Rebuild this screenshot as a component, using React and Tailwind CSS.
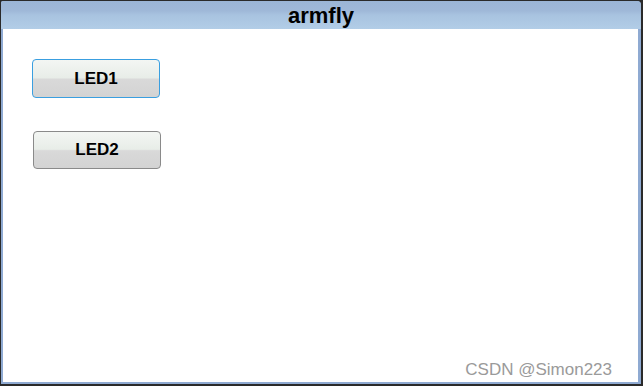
export default function App() {
  return (
    <div className="w-[643px] h-[386px] bg-[#2a2a2a] p-[1px] pb-[2px] pr-[2px]" style={{ fontFamily: '"Liberation Sans", Arial, sans-serif' }}>
      <div className="w-full h-full flex flex-col bg-[#8faad2] rounded-tr-[4px] rounded-tl-[2px] overflow-hidden">
        <div className="h-[28px] shrink-0 flex items-center justify-center bg-[linear-gradient(to_bottom,#9bb5d6_0%,#9fb8d8_35%,#a8c3e0_50%,#b2cde7_100%)]">
          <span className="text-[22px] font-bold text-black leading-none translate-y-[1px]">armfly</span>
        </div>
        <div className="flex-1 ml-[2px] mr-[3px] mb-[2px] bg-white flex flex-col relative">
          <div className="flex flex-col gap-[33px] pl-[29px] pt-[30px]">
            <button className="w-[128px] h-[39px] rounded-[4px] border border-[#3a9fe0] bg-[linear-gradient(to_bottom,#f3f6f3_0%,#e8ede8_48%,#d9d9d9_52%,#d3d3d3_100%)] flex items-center justify-center text-[17px] font-bold text-black">
              LED1
            </button>
            <button className="ml-[1px] w-[128px] h-[38px] rounded-[4px] border border-[#8a8a8a] bg-[linear-gradient(to_bottom,#f3f6f3_0%,#e8ede8_48%,#d9d9d9_52%,#d3d3d3_100%)] flex items-center justify-center text-[17px] font-bold text-black">
              LED2
            </button>
          </div>
          <div className="absolute right-[26px] bottom-[4px] text-[17px] text-[#9a9a9a] leading-none">CSDN @Simon223</div>
        </div>
      </div>
    </div>
  );
}
